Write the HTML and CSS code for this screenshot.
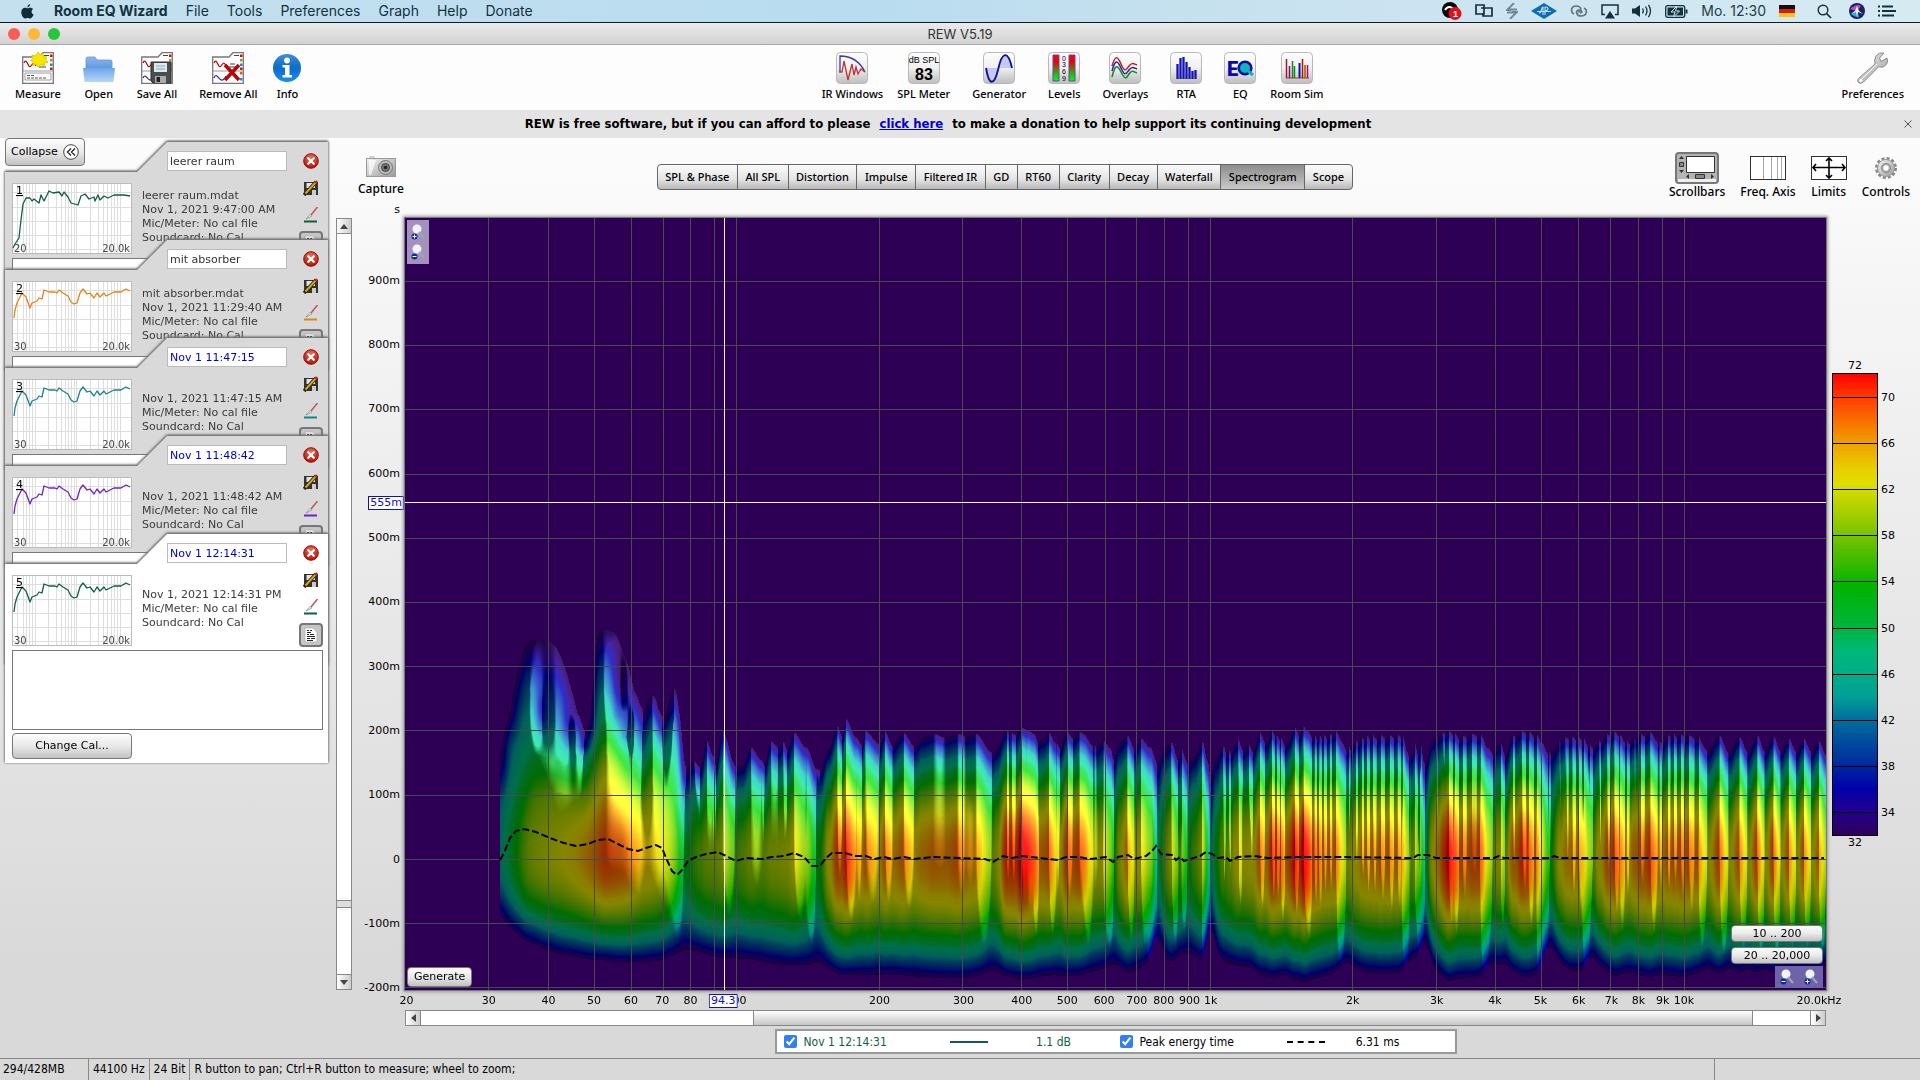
FILE: index.html
```html
<!DOCTYPE html>
<html lang="en">
<head>
<meta charset="utf-8">
<title>REW V5.19</title>
<link rel="stylesheet" href="styles.css">
</head>
<body>
<svg class="sprite" aria-hidden="true">
  <defs>
    <linearGradient id="gBtn" x1="0" y1="0" x2="0" y2="1"><stop offset="0" stop-color="#fdfdfd"/><stop offset=".5" stop-color="#f0f0f0"/><stop offset="1" stop-color="#bdbdbd"/></linearGradient>
    <linearGradient id="gBlue" x1="0" y1="0" x2="0" y2="1"><stop offset="0" stop-color="#8db8ef"/><stop offset="1" stop-color="#5d96df"/></linearGradient>
    <linearGradient id="gFront" x1="0" y1="0" x2="0" y2="1"><stop offset="0" stop-color="#6fa5e8"/><stop offset="1" stop-color="#b6d6fb"/></linearGradient>
    <linearGradient id="gInfo" x1="0" y1="0" x2="0" y2="1"><stop offset="0" stop-color="#3f8fd2"/><stop offset=".5" stop-color="#0d6cc6"/><stop offset="1" stop-color="#1590f5"/></linearGradient>
    <linearGradient id="gLevel" x1="0" y1="0" x2="0" y2="1"><stop offset="0" stop-color="#f00"/><stop offset=".3" stop-color="#d81000"/><stop offset=".75" stop-color="#1fc010"/><stop offset="1" stop-color="#0f0"/></linearGradient>
    <radialGradient id="gRed" cx=".5" cy=".3" r=".7"><stop offset="0" stop-color="#f0705a"/><stop offset="1" stop-color="#b01005"/></radialGradient>
    <linearGradient id="gMetal" x1="0" y1="0" x2="1" y2="1"><stop offset="0" stop-color="#f4f4f4"/><stop offset="1" stop-color="#9a9a9a"/></linearGradient>
  </defs>
  <symbol id="grid" viewBox="0 0 120 71">
    <rect width="120" height="71" fill="#fff"/>
    <path d="M5.500 0V71M11.500 0V71M14.500 0V71M17.500 0V71M20.500 0V71M23.500 0V71M36.500 0V71M44.500 0V71M49.500 0V71M53.500 0V71M56.500 0V71M59.500 0V71M62.500 0V71M64.500 0V71M78.500 0V71M86.500 0V71M91.500 0V71M95.500 0V71M99.500 0V71M102.500 0V71M105.500 0V71M108.500 0V71M0 9.500H120M0 24.500H120M0 38.500H120M0 52.500H120M0 66.500H120" stroke="#dedede" fill="none"/>
    <rect x=".5" y=".5" width="119" height="70" fill="none" stroke="#bbb"/>
  </symbol>
  <symbol id="curveA" viewBox="0 0 120 71"><path d="M1 65L3 61L7 55L9 37L11 21L14 15L18 15L20 18L22 16L27 20L29 12L32 18L34 14L37 8L41 10L47 9L50 13L52 9L56 14L59 20L66 22L69 13L73 11L77 16L82 14L83 18L86 12L88 17L92 13L96 15L102 12L112 12L118 13" fill="none" stroke="currentColor" stroke-width="1.300" stroke-linejoin="round"/></symbol>
  <symbol id="curveB" viewBox="0 0 120 71"><path d="M2 37L3 29L5 22L10 12L14 16L18 27L20 22L25 20L27 17L30 18L32 9L37 11L43 11L45 12L47 9L51 12L56 15L59 21L62 23L65 22L68 12L71 8L75 13L78 12L82 17L85 12L88 16L92 12L94 15L102 11L109 11L114 8L118 10" fill="none" stroke="currentColor" stroke-width="1.300" stroke-linejoin="round"/></symbol>
  <symbol id="close" viewBox="0 0 16 16"><circle cx="8" cy="8" r="7.300" fill="url(#gRed)" stroke="#8d1408"/><path d="M5.200 5.200L10.800 10.800M10.800 5.200L5.200 10.800" stroke="#fff" stroke-width="2.200" stroke-linecap="round"/></symbol>
  <symbol id="save" viewBox="0 0 16 16"><path d="M1 2H15V15H3L1 13Z" fill="#333"/><path d="M3.500 3H12V8H3.500Z" fill="#e2e2e2"/><path d="M9 10H13V15H9Z" fill="#ccc"/><path d="M1 15L13 2" stroke="#2a2a1a" stroke-width="3.600"/><path d="M2.500 13.500L12.500 2.600" stroke="#dba515" stroke-width="2"/><path d="M12.300 3L14 1" stroke="#c22" stroke-width="2.600"/></symbol>
  <symbol id="brush" viewBox="0 0 16 16"><path d="M14.500 0L8 8" stroke="#c4575a" stroke-width="1.600"/><path d="M7.500 7L9 9L3 12Z" fill="#eee" stroke="#777" stroke-width=".6"/><path d="M1 14.500H14" stroke="currentColor" stroke-width="2"/></symbol>
  <symbol id="notes" viewBox="0 0 14 16"><path d="M1 1H9L13 5V15H1Z" fill="#fdfdfd" stroke="#aaa" stroke-width=".7"/><path d="M3 3.500H5M6 3.500H8M3 5.500H7M3 7.500H5M6 7.500H10M3 9.500H11M3 11.500H6M7 11.500H11M3 13.500H9" stroke="#222"/></symbol>
  <symbol id="pages" viewBox="0 0 32 32"><path d="M.7 5H17L21 .7H31.300V31.300H.7Z" fill="#fff" stroke="#777" stroke-width="1.300"/><path d="M.7 19H31" stroke="#999"/><path d="M2 11C5 4 6 18 9 14S12 10 14 14" stroke="#b00" stroke-width="1.200" fill="none"/><path d="M22 3.500H27M18 12H23M17 15H24" stroke="#444"/><path d="M28 2.500H30.500V5H28Z" fill="#c11"/><path d="M28 7H30.500V9.500H28Z" fill="#b80"/><path d="M28 11.500H30.500V14H28Z" fill="#18c"/><path d="M28 15.500H30.500V18H28Z" fill="#a22"/></symbol>
  <symbol id="face" viewBox="0 0 32 32"><rect x=".5" y=".5" width="31" height="31" rx="4" fill="url(#gBtn)" stroke="#b8b8b8"/></symbol>
  <symbol id="zoomIn" viewBox="0 0 18 16"><circle cx="8" cy="5" r="4.500" fill="#f3f1f8"/><path d="M10 8L15 14" stroke="#a99fb8" stroke-width="2"/><circle cx="5.500" cy="12.500" r="3" fill="#0a2f96"/><path d="M3.500 12.500H7.500M5.500 10.500V14.500" stroke="#fff"/></symbol>
  <symbol id="zoomOut" viewBox="0 0 18 16"><circle cx="8" cy="5" r="4.500" fill="#f3f1f8"/><path d="M10 8L15 14" stroke="#a99fb8" stroke-width="2"/><circle cx="5.500" cy="12.500" r="3" fill="#0a2f96"/><path d="M3.500 12.500H7.500" stroke="#fff"/></symbol>
</svg>

<header class="menubar">
  <nav class="menus">
    <svg class="apple" viewBox="0 0 14 16"><path d="M9.800 0C9.900 1.800 8.500 3.600 6.900 3.600C6.700 1.900 8.200.2 9.800 0ZM7.100 4.600C7.800 4.600 8.700 3.900 10 3.900C11.300 3.900 12.400 4.500 13.100 5.400C10.600 6.900 11 10.300 13.600 11.300C13 13 11.500 15.500 10 15.500C8.900 15.500 8.500 14.900 7.200 14.900C5.900 14.900 5.400 15.500 4.400 15.500C2.500 15.500.3 12 .3 8.900C.3 5.800 2.200 4 4.200 4C5.500 4 6.400 4.600 7.100 4.600Z" fill="#0f2c3c"/></svg>
    <a href="#app" class="app">Room EQ Wizard</a><a href="#file">File</a><a href="#tools">Tools</a><a href="#prefs">Preferences</a><a href="#graph">Graph</a><a href="#help">Help</a><a href="#donate">Donate</a>
  </nav>
  <div class="tray">
    <svg width="20" height="18" viewBox="0 0 20 18"><circle cx="8" cy="8" r="8" fill="#0a0a0a"/><path d="M3 8C6 3 10 5 12 8" stroke="#fff" stroke-width="2" fill="none"/><circle cx="13" cy="11.500" r="6.500" fill="#e0101c"/><text x="11" y="15" class="badge">1</text></svg>
    <svg width="18" height="14" viewBox="0 0 18 14"><path d="M1 1H9V10H1ZM6 4H10M8 4H17V12H8V9" fill="none" stroke="#14303c" stroke-width="1.700"/></svg>
    <svg width="12" height="16" viewBox="0 0 12 16"><path d="M8 0L1 7H5M6 9H11L4 16M1 6.500H11M1 9.500H11" fill="none" stroke="#6e8894" stroke-width="1.800"/></svg>
    <svg width="26" height="16" viewBox="0 0 26 16"><path d="M13 0L26 8L13 16L0 8Z" fill="#0c6bb5"/><path d="M8 10C11 10 10 4 12 4V12M14 12V4C18 4 18 7 14 8M6 8.500H20" fill="none" stroke="#bfe0f5" stroke-width="1.100"/></svg>
    <svg width="18" height="14" viewBox="0 0 18 14"><path d="M4 10C0 8 1 2 6 2C12 2 12 8 8 8M14 4C18 6 17 12 11 12C6 12 5 6 9 6C12 6 13 9 10 9" fill="none" stroke="#5b7480" stroke-width="1.600"/></svg>
    <svg width="18" height="15" viewBox="0 0 18 15"><path d="M4 10.500H1V1H17V10.500H14" fill="none" stroke="#14303c" stroke-width="1.500"/><path d="M9 7L14 14.500H4Z" fill="#14303c"/></svg>
    <svg width="20" height="14" viewBox="0 0 20 14"><path d="M0 4.500H3L8 1V13L3 9.500H0Z" fill="#14303c"/><path d="M10.500 4.500Q12 7 10.500 9.500M13.500 2.500Q16.500 7 13.500 11.500M16.500 .8Q20.500 7 16.500 13.200" stroke="#14303c" stroke-width="1.300" fill="none"/></svg>
    <svg width="23" height="13" viewBox="0 0 23 13"><rect x=".7" y=".7" width="19" height="11.600" rx="2" fill="none" stroke="#14303c" stroke-width="1.300"/><rect x="2.500" y="2.500" width="15.500" height="8" fill="#14303c"/><path d="M12 1L6 7H10L8.500 12L14.500 6H10.500Z" fill="#14303c" stroke="#d2e7f0"/><path d="M21.500 4.500V8.500" stroke="#14303c" stroke-width="2"/></svg>
    <time class="clock">Mo. 12:30</time>
    <svg width="16" height="12" viewBox="0 0 16 12"><path d="M0 0H16V4H0Z" fill="#111"/><path d="M0 4H16V8H0Z" fill="#d51b1b"/><path d="M0 8H16V12H0Z" fill="#f6c415"/></svg>
    <svg class="wide" width="15" height="15" viewBox="0 0 15 15"><circle cx="6" cy="6" r="4.800" fill="none" stroke="#14303c" stroke-width="1.400"/><path d="M9.500 9.500L14 14" stroke="#14303c" stroke-width="1.700"/></svg>
    <svg class="mid" width="16" height="16" viewBox="0 0 16 16"><circle cx="8" cy="8" r="8" fill="#1b2266"/><path d="M1 6Q8 0 12 3L8 8Z" fill="#c04ab5"/><path d="M2 11Q6 15 10 14L8 6Z" fill="#2aa8d8"/><path d="M8 3L10 8L14 11L9 9L8 14L7 9L2 11L6 8Z" fill="#e6f4ff"/></svg>
    <svg width="18" height="12" viewBox="0 0 18 12"><path d="M4 1.500H15M4 6H18M4 10.500H16M0 1.500H2M0 6H2M0 10.500H2" stroke="#14303c" stroke-width="1.800"/></svg>
  </div>
</header>

<div class="titlebar"><span class="dot red"></span><span class="dot amber"></span><span class="dot green"></span><h1>REW V5.19</h1></div>

<div class="toolbar">
  <div class="group">
    <button class="tool"><svg viewBox="0 0 32 32"><use href="#pages"/><path d="M3 21H29V28H3Z" fill="#fff" stroke="#888" stroke-width=".8"/><path d="M5 23.500H13M5 26H24" stroke="#555" stroke-dasharray="3 1"/><path d="M16 0L18 3L21 1.500L21.500 4.500L25 5L23.500 8L26 10L22.500 11L22 14L19 12.500L16 15L14.500 12L11 13.500L11.500 10L8.500 8.500L11 6.500L10 3L13.500 4Z" fill="#f7e600" stroke="#e2c900"/></svg>Measure</button>
    <button class="tool"><svg viewBox="0 0 32 32"><path d="M3 17V7Q3 5 5 5H12L14 8H28Q29 8 29 10V17Z" fill="url(#gBlue)" stroke="#6a94cc" stroke-width=".8"/><path d="M0 16H32L30.500 29Q30.500 30 29 30H3Q1.500 30 1.500 29Z" fill="url(#gFront)"/></svg>Open</button>
    <button class="tool"><svg viewBox="0 0 32 32"><use href="#pages"/><path d="M2 26C5 19 7 33 12 26" stroke="#22b" fill="none" stroke-width="1.200"/><path d="M10 10H30V31H12L10 29Z" fill="#4a4d50" stroke="#2c2c2c"/><path d="M13 11H26V20H13Z" fill="#dfe8ee"/><path d="M15 14H24M15 17H24" stroke="#8aa"/><path d="M14 24H25V31H14Z" fill="#aaa"/><path d="M15.500 25H19V30H15.500Z" fill="#222"/></svg>Save All</button>
    <div class="pair">
      <button class="tool"><svg viewBox="0 0 32 32"><use href="#pages"/><path d="M2 26C5 17 8 36 14 24" stroke="#22b" fill="none" stroke-width="1.200"/><path d="M28 20H30.500V22.500H28Z" fill="#c60"/><path d="M28 26H30.500V28.500H28Z" fill="#19c"/><path d="M13 13L27 28M27 13L13 28" stroke="#b30707" stroke-width="3.600"/></svg>Remove All</button>
      <button class="tool"><svg viewBox="0 0 32 32"><circle cx="16" cy="16" r="14" fill="url(#gInfo)"/><circle cx="16" cy="8.500" r="2.900" fill="#fff"/><path d="M11.500 13H18.500V23H21V25.500H11.500V23H14V15.500H11.500Z" fill="#fff"/></svg>Info</button>
    </div>
  </div>
  <div class="group">
    <div class="pair">
      <button class="tool"><svg viewBox="0 0 32 32"><use href="#face"/><path d="M4 20V4C16 4 24 10 29 20" fill="none" stroke="#3a38b8" stroke-width="1.300"/><path d="M3 20H6L8 9L12 28L16 12L18 23L20 15L22 22L25 17L29 20" fill="none" stroke="#b33" stroke-width="1.300"/></svg>IR Windows</button>
      <button class="tool"><svg viewBox="0 0 32 32"><use href="#face"/><text x="16" y="11" class="spl">dB SPL</text><text x="16" y="28" class="spl big">83</text></svg>SPL Meter</button>
    </div>
    <button class="tool"><svg viewBox="0 0 32 32"><use href="#face"/><path d="M3 16H16C12 34 7 32 3 16M16 16H29C26 -1 20 -1 16 16" fill="#c5c9ee"/><path d="M3 16C6 34 11 34 15 18C19 -1 25 -2 29 16" fill="none" stroke="#10109c" stroke-width="1.900"/></svg>Generator</button>
    <button class="tool"><svg viewBox="0 0 32 32"><use href="#face"/><path d="M5 3H11V29H5ZM21 3H27V29H21Z" fill="url(#gLevel)" stroke="#64b"/><text x="16" y="9" class="tiny">0</text><text x="16" y="15" class="tiny">3</text><text x="16" y="22" class="tiny">6</text><text x="16" y="29" class="tiny">9</text></svg>Levels</button>
    <button class="tool"><svg viewBox="0 0 32 32"><use href="#face"/><g fill="none" stroke-width="1.500"><path d="M3 14C6 4 8 3 12 12S17 18 20 14S25 12 28 13" stroke="#b22"/><path d="M3 19C6 8 8 7 12 16S17 22 20 18S25 16 28 17" stroke="#22a"/><path d="M3 25C6 13 8 12 12 20S17 27 20 22S25 20 28 21" stroke="#182"/></g></svg>Overlays</button>
    <button class="tool"><svg viewBox="0 0 32 32"><use href="#face"/><path d="M7.500 27V12M10.500 27V6M13.500 27V5M16.500 27V10M19.500 27V15M22.500 27V19M25.500 27V18" stroke="#1414b4" stroke-width="2.300"/></svg>RTA</button>
    <div class="pair">
      <button class="tool"><svg viewBox="0 0 32 32"><use href="#face"/><text x="3" y="24" class="eq">E</text><circle cx="21" cy="16" r="6.300" fill="#10b5b5" stroke="#0a0aa5" stroke-width="2.600"/><path d="M24 19L29 23" stroke="#10b5b5" stroke-width="3"/></svg>EQ</button>
      <button class="tool"><svg viewBox="0 0 32 32"><use href="#face"/><path d="M5.500 26V7" stroke="#922" stroke-width="1.500"/><path d="M8.500 26V14" stroke="#808" stroke-width="1.500"/><path d="M11.500 26V9M13.500 26V14" stroke="#182" stroke-width="1.500"/><path d="M18.500 26V11" stroke="#11a" stroke-width="2"/><path d="M21.500 26V7" stroke="#a11" stroke-width="1.500"/><path d="M24 26V13" stroke="#a80" stroke-width="2"/><path d="M26.500 26V13" stroke="#a0a" stroke-width="1.500"/><path d="M5 26H28" stroke="#933"/></svg>Room Sim</button>
    </div>
  </div>
  <button class="tool"><svg viewBox="0 0 32 32"><path d="M27 1L22.500 6L24 9.500L30 6Q32 12 26 15Q24 15.500 22 14.500L6.500 30Q3 33 1 30Q0 28 2 26L18 12Q17 8 19 4Q22 0 27 1Z" fill="url(#gMetal)" stroke="#8b8b8b"/><path d="M20 12L5 27" stroke="#fff" opacity=".8"/><circle cx="3.800" cy="28.400" r="1.500" fill="#fff"/></svg>Preferences</button>
</div>

<div class="banner"><p>REW is free software, but if you can afford to please <a href="#donate">click here</a> to make a donation to help support its continuing development</p><button class="dismiss" aria-label="Dismiss"><svg width="8" height="8" viewBox="0 0 8 8"><path d="M.5 .5L7.500 7.500M7.500 .5L.5 7.500" stroke="#555"/></svg></button></div>

<main>
  <aside>
    <button class="btn collapse">Collapse <svg width="16" height="16" viewBox="0 0 16 16"><circle cx="8" cy="8" r="7.300" fill="#fff" stroke="#444"/><path d="M8 4.500L4.500 8L8 11.500M12 4.500L8.500 8L12 11.500" fill="none" stroke="#222" stroke-width="1.300"/></svg></button>
    <div class="stack">
      <div class="shade"><article class="card green1">
        <input class="name" aria-label="Measurement 1 name" value="leerer raum">
        <svg class="thumb" viewBox="0 0 120 71"><use href="#grid"/><use href="#curveA"/><text x="4" y="11" class="num">1</text><text x="2" y="69" class="lim">20</text><text x="118" y="69" class="lim end">20.0k</text></svg>
        <p>leerer raum.mdat<br>Nov 1, 2021 9:47:00 AM<br>Mic/Meter: No cal file<br>Soundcard: No Cal</p>
        <div class="acts"><button aria-label="Remove"><svg><use href="#close"/></svg></button><button aria-label="Save"><svg><use href="#save"/></svg></button><button aria-label="Colour"><svg><use href="#brush"/></svg></button><button class="pressed" aria-label="Notes"><svg><use href="#notes"/></svg></button></div>
        <textarea aria-label="Notes 1"></textarea>
      </article></div>
      <div class="shade"><article class="card orange">
        <input class="name" aria-label="Measurement 2 name" value="mit absorber">
        <svg class="thumb" viewBox="0 0 120 71"><use href="#grid"/><use href="#curveB"/><text x="4" y="11" class="num">2</text><text x="2" y="69" class="lim">30</text><text x="118" y="69" class="lim end">20.0k</text></svg>
        <p>mit absorber.mdat<br>Nov 1, 2021 11:29:40 AM<br>Mic/Meter: No cal file<br>Soundcard: No Cal</p>
        <div class="acts"><button aria-label="Remove"><svg><use href="#close"/></svg></button><button aria-label="Save"><svg><use href="#save"/></svg></button><button aria-label="Colour"><svg><use href="#brush"/></svg></button><button class="pressed" aria-label="Notes"><svg><use href="#notes"/></svg></button></div>
        <textarea aria-label="Notes 2"></textarea>
      </article></div>
      <div class="shade"><article class="card teal">
        <input class="name unsaved" aria-label="Measurement 3 name" value="Nov 1 11:47:15">
        <svg class="thumb" viewBox="0 0 120 71"><use href="#grid"/><use href="#curveB"/><text x="4" y="11" class="num">3</text><text x="2" y="69" class="lim">30</text><text x="118" y="69" class="lim end">20.0k</text></svg>
        <p>Nov 1, 2021 11:47:15 AM<br>Mic/Meter: No cal file<br>Soundcard: No Cal</p>
        <div class="acts"><button aria-label="Remove"><svg><use href="#close"/></svg></button><button aria-label="Save"><svg><use href="#save"/></svg></button><button aria-label="Colour"><svg><use href="#brush"/></svg></button><button class="pressed" aria-label="Notes"><svg><use href="#notes"/></svg></button></div>
        <textarea aria-label="Notes 3"></textarea>
      </article></div>
      <div class="shade"><article class="card violet">
        <input class="name unsaved" aria-label="Measurement 4 name" value="Nov 1 11:48:42">
        <svg class="thumb" viewBox="0 0 120 71"><use href="#grid"/><use href="#curveB"/><text x="4" y="11" class="num">4</text><text x="2" y="69" class="lim">30</text><text x="118" y="69" class="lim end">20.0k</text></svg>
        <p>Nov 1, 2021 11:48:42 AM<br>Mic/Meter: No cal file<br>Soundcard: No Cal</p>
        <div class="acts"><button aria-label="Remove"><svg><use href="#close"/></svg></button><button aria-label="Save"><svg><use href="#save"/></svg></button><button aria-label="Colour"><svg><use href="#brush"/></svg></button><button class="pressed" aria-label="Notes"><svg><use href="#notes"/></svg></button></div>
        <textarea aria-label="Notes 4"></textarea>
      </article></div>
      <div class="shade"><article class="card green1 active">
        <input class="name unsaved" aria-label="Measurement 5 name" value="Nov 1 12:14:31">
        <svg class="thumb" viewBox="0 0 120 71"><use href="#grid"/><use href="#curveB"/><text x="4" y="11" class="num">5</text><text x="2" y="69" class="lim">30</text><text x="118" y="69" class="lim end">20.0k</text></svg>
        <p>Nov 1, 2021 12:14:31 PM<br>Mic/Meter: No cal file<br>Soundcard: No Cal</p>
        <div class="acts"><button aria-label="Remove"><svg><use href="#close"/></svg></button><button aria-label="Save"><svg><use href="#save"/></svg></button><button aria-label="Colour"><svg><use href="#brush"/></svg></button><button class="pressed" aria-label="Notes"><svg><use href="#notes"/></svg></button></div>
        <textarea aria-label="Notes 5"></textarea>
        <button class="btn cal">Change Cal...</button>
      </article></div>
    </div>
  </aside>

  <section class="graph">
    <div class="head">
      <button class="tool small"><svg width="30" height="21" viewBox="0 0 30 21"><path d="M4 0H8V3H4Z" fill="#ddd" stroke="#aaa" stroke-width=".6"/><rect x=".5" y="2.500" width="29" height="18" fill="url(#gMetal)" stroke="#999"/><path d="M3 4H10L5 19H3Z" fill="#fff" opacity=".7"/><circle cx="19.500" cy="11.500" r="7" fill="#bbb" stroke="#777"/><circle cx="19.500" cy="11.500" r="4" fill="#777" stroke="#444"/><circle cx="19.500" cy="11.500" r="1.700" fill="#222"/></svg>Capture</button>
      <div class="tabs"><button>SPL &amp; Phase</button><button>All SPL</button><button>Distortion</button><button>Impulse</button><button>Filtered IR</button><button>GD</button><button>RT60</button><button>Clarity</button><button>Decay</button><button>Waterfall</button><button class="on">Spectrogram</button><button>Scope</button></div>
      <div class="opts">
        <button class="tool small"><svg width="44" height="32" viewBox="0 0 44 32"><rect x="1" y="1" width="42" height="30" rx="3" fill="#b4b4b4" stroke="#777" stroke-width="2"/><path d="M3 27H41V30H3Z" fill="#eee"/><path d="M11.500 4.500H39.500V20.500H11.500Z" fill="#fff" stroke="#333"/><path d="M4.500 10.500H8.500V14.500H4.500ZM20.500 22.500H29.500V26.500H20.500Z" fill="#888" stroke="#333"/><path d="M4 7H9L6.500 4ZM4 18H9L6.500 21ZM14 22V27L11 24.500ZM36 22V27L39 24.500Z" fill="#333"/></svg>Scrollbars</button>
        <button class="tool small"><svg width="36" height="32" viewBox="0 0 36 32"><rect x=".5" y="4.500" width="35" height="23" fill="#fff" stroke="#333"/><path d="M13.500 5V27M21.500 5V27M27.500 5V27M31.500 5V27" stroke="#aaa"/></svg>Freq. Axis</button>
        <button class="tool small"><svg width="36" height="32" viewBox="0 0 36 32"><rect x=".5" y="4.500" width="35" height="23" fill="#fff" stroke="#333"/><path d="M2 15.500H34M18 6V26M5 12L2 15.500L5 19M31 12L34 15.500L31 19M15 9L18 6L21 9M15 23L18 26L21 23" fill="none" stroke="#000" stroke-width="1.600"/></svg>Limits</button>
        <button class="tool small"><svg width="24" height="32" viewBox="0 0 24 32"><circle cx="12" cy="16" r="9.500" fill="none" stroke="#888" stroke-width="3" stroke-dasharray="3 2"/><circle cx="12" cy="16" r="8.500" fill="url(#gMetal)" stroke="#999"/><circle cx="12" cy="16" r="4.500" fill="#aaa" stroke="#888"/><circle cx="12" cy="16" r="2.700" fill="#fff"/></svg>Controls</button>
      </div>
    </div>
    <div class="vscroll"><button aria-label="Scroll up"><i class="up"></i></button><div class="track"><span class="thumbbar"></span></div><button aria-label="Scroll down"><i class="down"></i></button></div>
    <div class="yaxis">
      <span class="unit">s</span>
      <span style="top:8.2%">900m</span><span style="top:16.5%">800m</span><span style="top:24.8%">700m</span><span style="top:33.1%">600m</span><span style="top:41.5%">500m</span><span style="top:49.8%">400m</span><span style="top:58.1%">300m</span><span style="top:66.4%">200m</span><span style="top:74.7%">100m</span><span style="top:83.1%">0</span><span style="top:91.4%">-100m</span><span style="top:99.7%">-200m</span>
      <output style="top:36.9%">555m</output>
    </div>
    <div class="plot">
      <canvas id="spectro" width="1421" height="772"></canvas>
      <div class="zoomv"><button aria-label="Zoom in time"><svg><use href="#zoomIn"/></svg></button><button aria-label="Zoom out time"><svg><use href="#zoomOut"/></svg></button></div>
      <button class="btn generate">Generate</button>
      <div class="ranges"><button class="btn">10 .. 200</button><button class="btn">20 .. 20,000</button><div class="zoomh"><button aria-label="Zoom out frequency"><svg><use href="#zoomOut"/></svg></button><button aria-label="Zoom in frequency"><svg><use href="#zoomIn"/></svg></button></div></div>
    </div>
    <div class="legendbar"><span>72</span><div class="ramp"><b style="top:5%">70</b><b style="top:15%">66</b><b style="top:25%">62</b><b style="top:35%">58</b><b style="top:45%">54</b><b style="top:55%">50</b><b style="top:65%">46</b><b style="top:75%">42</b><b style="top:85%">38</b><b style="top:95%">34</b></div><span>32</span></div>
    <div class="xaxis">
      <span style="left:0.1%">20</span><span style="left:5.9%">30</span><span style="left:10.1%">40</span><span style="left:13.3%">50</span><span style="left:15.9%">60</span><span style="left:18.1%">70</span><span style="left:20.1%">80</span><span style="left:23.3%">100</span><span style="left:33.4%">200</span><span style="left:39.3%">300</span><span style="left:43.4%">400</span><span style="left:46.6%">500</span><span style="left:49.2%">600</span><span style="left:51.5%">700</span><span style="left:53.4%">800</span><span style="left:55.2%">900</span><span style="left:56.7%">1k</span><span style="left:66.7%">2k</span><span style="left:72.6%">3k</span><span style="left:76.7%">4k</span><span style="left:79.9%">5k</span><span style="left:82.6%">6k</span><span style="left:84.9%">7k</span><span style="left:86.8%">8k</span><span style="left:88.5%">9k</span><span style="left:90%">10k</span><span style="left:99.5%">20.0kHz</span>
      <output style="left:22.4%">94.3</output>
    </div>
    <div class="hscroll"><button aria-label="Scroll left"><i class="left"></i></button><div class="track"><span class="thumbbar"></span></div><button aria-label="Scroll right"><i class="right"></i></button></div>
    <div class="legend">
      <input type="checkbox" id="t1" checked><label for="t1" class="g">Nov 1 12:14:31</label><i class="line"></i><span class="g">1.1 dB</span>
      <input type="checkbox" id="t2" checked><label for="t2">Peak energy time</label><i class="line dash"></i><span>6.31 ms</span>
    </div>
  </section>
</main>

<footer><span>294/428MB</span><span>44100 Hz</span><span>24 Bit</span><span class="hint">R button to pan; Ctrl+R button to measure; wheel to zoom;</span><span class="tail"></span></footer>
<script src="spectrogram.js"></script>
</body>
</html>
```
FILE: styles.css
```css
* { box-sizing: border-box; }
body { margin: 0; min-height: 100vh; display: flex; flex-direction: column; font: 11px/14px "DejaVu Sans", sans-serif; color: #000; background: #d9d9d9; }
button, input, textarea { font: inherit; color: inherit; margin: 0; }
button { border: 0; padding: 0; background: none; }
p, h1 { margin: 0; }
svg { display: block; }
.sprite { position: absolute; width: 0; height: 0; }

.menubar { height: 23px; display: flex; justify-content: space-between; align-items: center; padding: 0 24px 0 21px; background: linear-gradient(90deg, #c4e0ee, #b9dcf0 45%, #c6e1ee 62%, #d6eaf2); border-bottom: 1px solid #0c1c26; font: 14px/22px Inter, sans-serif; }
.menubar a { color: #123240; text-decoration: none; }
.menus { display: flex; align-items: center; gap: 18px; }
.apple { width: 13px; height: 15px; margin-right: 2px; }
.menus .app { font-weight: 700; }
.tray { display: flex; align-items: center; gap: 13px; color: #223c48; }
.tray .wide { margin-left: 9px; }
.tray .mid { margin-left: 4px; }
.badge { font: 700 9px "Liberation Sans", sans-serif; fill: #fff; }

.titlebar { height: 22px; display: flex; align-items: center; gap: 8px; padding: 0 8px; background: linear-gradient(#ebebeb, #d2d2d2); border-bottom: 1px solid #aaa; }
.titlebar h1 { flex: 1; padding-right: 60px; text-align: center; font: 13px/20px Inter, sans-serif; color: #333; }
.dot { width: 12px; height: 12px; border-radius: 50%; }
.red { background: #fc5b57; }
.amber { background: #fdb935; }
.green { background: #28c53f; }

.toolbar { height: 65px; display: flex; justify-content: space-between; align-items: flex-start; padding: 7px 16px 0 15px; background: #fdfdfd; }
.group { display: flex; gap: 22px; }
.pair { display: flex; gap: 14px; }
.tool { display: flex; flex-direction: column; align-items: center; gap: 3px; font: 500 11px/14px "Noto Sans", sans-serif; white-space: nowrap; }
.tool svg { width: 32px; height: 32px; }
.spl { font: 9px "Liberation Sans", sans-serif; text-anchor: middle; }
.spl.big { font-size: 16px; font-weight: 700; }
.tiny { font: 7px "Liberation Sans", sans-serif; text-anchor: middle; }
.eq { font: 900 20px Roboto, sans-serif; fill: #0a0aa5; }

.banner { height: 28px; display: flex; align-items: center; padding: 0 8px; background: #e4e4e4; font: 700 13px/18px "DejaVu Sans Condensed", "Noto Sans", sans-serif; }
.banner p { flex: 1; padding-right: 16px; text-align: center; }
.banner a { color: #0000d4; margin: 0 5px; }

main { flex: 1; display: flex; background: linear-gradient(#fcfcfc, #d9d9d9 90%); }
aside { width: 336px; padding: 0 8px 0 5px; }
.btn { border: 1px solid #777; border-radius: 4px; background: linear-gradient(#fdfdfd, #e9e9e9 50%, #c2c2c2); }
.collapse { display: flex; align-items: center; gap: 5px; height: 28px; padding: 0 5px; }
.stack { margin-top: -24px; }
.shade { filter: drop-shadow(0 -1px 1px #666) drop-shadow(0 0 1px #888); pointer-events: none; }
.shade + .shade { margin-top: -131px; }
.card { pointer-events: auto; height: 229px; padding: 9px 5px 4px 7px; display: grid; grid-template: 32px 71px 80px 26px / 120px 1fr 24px; column-gap: 10px; background: #d9d9d9; clip-path: polygon(0 30px, 132px 30px, 162px 0, 100% 0, 100% 100%, 0 100%); }
.card.active { background: #fff; }
.name { grid-area: 1 / 2; margin-left: 25px; width: 120px; height: 20px; border: 1px solid #bbb; padding: 0 2px; background: #fff; color: #333; outline: 0; }
.unsaved { color: #0000c4; }
.thumb { grid-area: 2 / 1; width: 120px; height: 71px; }
.card p { grid-area: 2 / 2; align-self: center; margin-top: -4px; color: #3a3a3a; white-space: nowrap; }
.acts { grid-area: 1 / 3 / 3; display: flex; flex-direction: column; align-items: center; gap: 11px; padding-top: 2px; }
.acts svg { width: 16px; height: 16px; }
.acts .pressed { width: 24px; height: 24px; margin-top: -3px; padding: 2px 3px; flex: none; border: 2px solid #777; border-radius: 4px; background: #c6c6c6; }
.acts .pressed svg { width: 14px; height: 16px; }
.card textarea { grid-area: 3 / 1 / 4 / 4; margin-top: 4px; height: 80px; border: 1px solid #777; resize: none; background: #fff; }
.cal { grid-area: 4 / 1; margin-top: 7px; height: 26px; }
.num { font-size: 11px; text-decoration: underline; fill: #000; }
.lim { font: 11px "DejaVu Sans Condensed", "DejaVu Sans", sans-serif; fill: #444; }
.end { text-anchor: end; }
.green1 .thumb, .green1 .acts { color: #106040; }
.orange .thumb, .orange .acts { color: #e0851a; }
.teal .thumb, .teal .acts { color: #17858a; }
.violet .thumb, .violet .acts { color: #7022c4; }

.graph { flex: 1; min-width: 0; display: grid; grid-template: 80px 1fr 20px 16px 32px / 16px 53px 1fr 94px; font-size: 11px; }
.head { grid-area: 1 / 1 / 2 / 5; display: grid; grid-template-columns: auto 4fr auto 5fr auto; padding: 14px 10px 0 22px; align-items: start; }
.tool.small { gap: 1px; font-size: 12px; }
.tool.small svg { width: auto; height: auto; }
.head > .tool.small { padding-top: 4px; gap: 5px; }
.tabs { grid-column: 3; display: flex; width: 696px; height: 26px; margin-top: 12px; border: 1px solid #666; border-radius: 4px; background: linear-gradient(#fbfbfb, #e4e4e4 60%, #b8b8b8); overflow: hidden; }
.tabs button { flex: 1 1 auto; font: 500 11px/22px "Noto Sans", sans-serif; white-space: nowrap; }
.tabs button + button { border-left: 1px solid #666; }
.tabs .on { background: linear-gradient(#8d8d8d, #c9c9c9); }
.opts { grid-column: 5; display: flex; gap: 15px; }

.vscroll, .hscroll { display: flex; border: 1px solid #888; background: #fff; }
.vscroll { grid-area: 2 / 1; flex-direction: column; }
.hscroll { grid-area: 4 / 3; }
.track { flex: 1; display: flex; }
.vscroll .track { flex-direction: column; justify-content: flex-end; padding-bottom: 66px; }
.vscroll .thumbbar { height: 8px; background: #ddd; border: solid #888; border-width: 1px 0; }
.hscroll .track { padding: 0 4% 0 23.4%; }
.hscroll .thumbbar { flex: 1; background: linear-gradient(#fff, #c6c6c6); border: solid #888; border-width: 0 1px; }
.vscroll button, .hscroll button { flex: 0 0 15px; display: grid; place-items: center; background: linear-gradient(90deg, #fff, #ccc); }
.vscroll button:first-child { border-bottom: 1px solid #888; }
.vscroll button:last-child { border-top: 1px solid #888; }
.hscroll button:first-child { border-right: 1px solid #888; }
.hscroll button:last-child { border-left: 1px solid #888; }
i.up, i.down, i.left, i.right { border: 4px solid transparent; }
i.up { border-top: 0; border-bottom: 5px solid #444; }
i.down { border-bottom: 0; border-top: 5px solid #444; }
i.left { border-left: 0; border-right: 5px solid #444; }
i.right { border-right: 0; border-left: 5px solid #444; }

.yaxis { grid-area: 2 / 2; position: relative; }
.yaxis span, .yaxis output { position: absolute; right: 5px; transform: translateY(-50%); }
.yaxis .unit { top: -8px; }
.yaxis output, .xaxis output { padding: 0 1px; line-height: 12px; border: 1px solid #1111b4; color: #1111b4; background: #fff; }
.yaxis output { right: 1px; }
.plot { grid-area: 2 / 3; position: relative; min-height: 400px; background: #2d0055; box-shadow: 0 0 0 1px #777, 0 0 3px 2px #999; }
.plot canvas { position: absolute; inset: 0; width: 100%; height: 100%; }
.zoomv { position: absolute; left: 2px; top: 2px; width: 22px; height: 44px; padding: 4px 2px; display: grid; gap: 4px; background: #a392bb; }
.plot svg { width: 18px; height: 16px; }
.generate { position: absolute; left: 2px; bottom: 3px; height: 20px; padding: 0 6px; }
.ranges { position: absolute; right: 3px; bottom: 2px; width: 92px; display: flex; flex-direction: column; gap: 5px; }
.ranges .btn { height: 17px; line-height: 14px; }
.zoomh { align-self: flex-end; width: 48px; height: 22px; margin-top: -3px; padding: 3px; display: flex; gap: 6px; background: #6c63a8; }

.legendbar { grid-area: 2 / 4; padding: 141px 42px 0 6px; display: flex; flex-direction: column; text-align: center; }
.ramp { position: relative; height: 463px; flex: none; border: 1px solid #000; background: linear-gradient(#f00, #ff3c00 5%, #f0a000 15%, #e6d200 21%, #dede00 24%, #78c300 35%, #00b400 46%, #00b43c 55%, #00b978 60%, #00a096 70%, #006e9b 75%, #0028a0 85%, #0000aa 90%, #23008c 95%, #2d005a); }
.ramp b { position: absolute; left: 0; width: 44px; border-top: 1px solid #000; font-weight: 400; line-height: 0; text-indent: 48px; white-space: nowrap; text-align: left; }

.xaxis { grid-area: 3 / 3; position: relative; }
.xaxis span, .xaxis output { position: absolute; top: 4px; transform: translateX(-50%); white-space: nowrap; }
.legend { grid-area: 5 / 3; justify-self: center; margin: 3px 0 4px; width: 682px; height: 25px; display: grid; grid-template-columns: 13px 139px 38px 118px 13px 140px 38px 92px; column-gap: 7px; align-items: center; padding-left: 7px; background: #fff; border: 2px solid #999; font: 12px/14px "DejaVu Sans Condensed", "DejaVu Sans", sans-serif; }
.legend input { width: 13px; height: 13px; accent-color: #2f7ff5; }
.legend span { text-align: center; }
.g { color: #106040; }
.line { border-top: 2px solid #106040; }
.line.dash { border-top: 2px dashed #000; }

footer { height: 22px; display: flex; font: 12px/21px "DejaVu Sans Condensed", "DejaVu Sans", sans-serif; border-top: 1px solid #888; background: #d9d9d9; white-space: nowrap; }
footer span { padding: 0 4px; border-right: 1px solid #888; }
footer span:first-child { width: 89px; padding-left: 3px; }
footer .hint { flex: 1; }
footer .tail { width: 205px; border: 0; }
```
FILE: spectrogram.js
```js
// Window coordinates of the default view; the canvas origin sits at X0, Y0.
const X0 = 405, Y0 = 218, W = 1421, H = 772, ZERO = 855;

// low modes: position, then the heights of the 32, 42, 50 and 58 dB contours, then the peak level
const modes = [
  [500,765,800,850,852,45],[510,712,745,825,850,50.500],[520,660,715,785,850,55.500],[527,642,688,768,822,59],[533,638,694,756,803,60],[541,639,728,755,797,61],[548,640,726,757,792,61.500],[555,645,718,762,791,62],[562,660,732,765,793,62.500],[570,685,745,769,796,63.500],[577,712,737,767,796,64.500],[584,746,756,774,796,65.500],[590,725,742,757,786,66.500],[597,627,692,742,772,68],[603,628,676,724,752,69.500],[609,630,692,726,755,69.400],[615,632,716,737,764,69],[623,642,737,752,778,68.500],[628,658,742,759,787,68],[633,690,722,757,791,67],[638,702,740,766,797,66],[641,712,757,777,802,65],[646,714,741,764,794,64.700],[651,692,718,744,777,64.600],[657,708,735,759,790,63.800],[662,726,746,770,800,62.500],[668,712,730,764,808,61],[673,684,718,770,832,58.500],[678,702,744,790,850,54.500],[682,762,806,840,850,50.500],[686,776,798,838,850,51.500],[692,760,782,812,850,55],[700,765,783,806,850,57.500]];

// frequency position, decay end, peak level (dB), onset start
const ridge = [
  [500,762,45,915],[508,722,49,925],[515,685,53,933],[528,640,59,942],[549,640,61.500,950],[560,655,62.300,954],[570,690,63.500,956],[590,700,66.500,959],[603,627,69.500,960],[622,648,68.600,962],[640,715,65.300,962],[650,692,64.600,961],[660,725,63,960],[673,684,58.500,955],[684,770,51,949],[687,778,52,949],[693,760,56,950],[700,768,57.500,952],[706,740,58.700,954],[713,755,59.200,956],[715,764,59.400,957],[722,730,60.500,958],[735,765,56.500,958],[742,765,58,958],[750,747,59.600,959],[762,760,58.600,961],[764,765,58.800,962],[770,740,60,963],[778,747,60.400,964],[783,741,60.800,965],[787,750,61.200,965],[793,732,63,965],[806,747,58.500,965],[816,768,51.500,962],[820,770,54,962],[828,748,63,968],[837,725,68.500,974],[842,737,69,975],[845,718,70.500,975],[856,737,67,975],[862,745,66,975],[864,730,67,975],[880,744,65,974],[884,730,67,974],[892,745,66,974],[903,732,67,975],[914,746,65,976],[922,737,66,977],[933,733,67,977],[945,737,67,978],[957,733,68,978],[965,736,67,978],[975,733,66,976],[992,752,59,970],[996,748,61,971],[1006,730,70,976],[1015,734,70,978],[1021,727,73,979],[1034,733,70,978],[1038,743,67,977],[1041,740,67,976],[1048,733,68,975],[1057,744,64,975],[1059,747,64,975],[1067,731,69,976],[1073,738,68,976],[1079,731,69,975],[1095,746,62,971],[1103,740,62,968],[1110,748,58,966],[1113,758,54,962],[1119,742,61,967],[1127,735,66,972],[1134,748,62,970],[1140,738,63,967],[1150,747,58,960],[1157,763,48,933],[1164,747,57,955],[1171,742,61,963],[1178,760,57,955],[1181,749,57,954],[1187,762,53,952],[1194,755,57,955],[1202,741,60,962],[1207,760,52,945],[1210,775,45,915],[1216,758,53,952],[1222,746,58,960],[1230,752,60,963],[1237,740,63,966],[1244,750,62,966],[1248,742,63,967],[1252,753,63,968],[1258,733,67,974],[1267,742,66,976],[1270,731,70,978],[1280,738,69,976],[1285,745,67,975],[1294,728,71,980],[1300,734,70,979],[1303,726,73,983],[1312,736,69,979],[1325,736,67,976],[1336,732,67,971],[1346,749,60,960],[1352,743,63,966],[1365,737,66,972],[1385,736,67,973],[1400,735,66,972],[1410,755,59,960],[1415,745,60,957],[1418,756,57,955],[1420,741,57,957],[1424,764,48,935],[1431,742,61,962],[1437,735,66,972],[1448,731,72,981],[1460,737,68,978],[1468,735,68,978],[1478,734,69,977],[1492,752,59,963],[1500,742,62,965],[1504,755,59,962],[1513,735,67,972],[1524,731,70,977],[1535,735,67,975],[1550,753,54,945],[1560,740,63,962],[1568,737,66,970],[1580,738,66,971],[1592,747,58,956],[1600,740,64,966],[1608,734,68,972],[1614,732,69,976],[1628,742,65,972],[1640,735,68,975],[1650,733,69,977],[1660,743,66,974],[1668,735,67,975],[1683,735,68,977],[1697,737,67,973],[1707,750,62,968],[1719,735,68,974],[1728,752,62,968],[1739,736,67,973],[1747,751,62,968],[1757,735,68,973],[1764,750,62,968],[1773,736,68,973],[1780,750,62,967],[1788,738,67,972],[1796,751,62,967],[1803,738,67,972],[1811,751,62,967],[1818,740,66,970],[1826,755,60,965]];

// fine comb on top of the ridge: from, to, period, depth
const comb = [[1008,1100,9,2],[1225,1256,6,4],[1256,1346,6,4],[1350,1408,7,5],[1408,1425,5,3],[1428,1550,8,4],[1560,1630,7,4],[1630,1700,8,4]];

// gaps between the slowly decaying low modes: x, y, radii, depth
const gaps = [[541,712,5,20,5.500],[567,725,5,22,4],[619,685,6,30,5],[629,720,4,14,3]];

const scale = [[32,45,0,90],[34,35,0,140],[36,0,0,170],[38,0,40,160],[42,0,110,155],[44,0,160,150],[48,0,185,120],[50,0,180,60],[53.500,0,180,0],[58,120,195,0],[62.500,222,222,0],[64,230,210,0],[66,240,160,0],[70,255,60,0],[72,255,0,0]];

const peakTime = [[500,860],[504,853],[510,838],[516,831],[524,829],[536,832],[550,838],[564,843],[576,846],[588,844],[598,840],[608,839],[618,844],[628,849],[638,851],[646,848],[656,845],[662,848],[667,860],[672,871],[677,875],[682,870],[688,861],[696,857],[706,854],[718,852],[724,855],[736,861],[746,858],[762,859],[772,857],[784,856],[794,853],[804,857],[812,866],[820,866],[826,858],[832,853],[845,853],[856,856],[866,856],[874,859],[884,857],[892,859],[904,857],[914,859],[932,857],[985,859],[993,862],[1003,856],[1012,858],[1022,856],[1040,858],[1057,860],[1066,857],[1078,857],[1090,859],[1106,857],[1113,862],[1118,857],[1128,855],[1134,859],[1146,856],[1152,851],[1156,846],[1161,854],[1172,855],[1176,860],[1180,857],[1184,861],[1200,856],[1206,852],[1212,854],[1218,858],[1226,857],[1230,861],[1238,857],[1254,856],[1268,858],[1300,857],[1340,857],[1413,858],[1418,855],[1428,855],[1436,858],[1494,858],[1499,856],[1504,858],[1550,858],[1554,856],[1560,858],[1824,858]];

const clamp = (v, lo, hi) => Math.max(lo, Math.min(hi, v));

const raw = [];
let k = 0;
for (let i = 0; i < W; i++) {
  const x = clamp(i + X0, 500, 1825.900);
  while (k < ridge.length - 2 && x >= ridge[k + 1][0]) k++;
  const a = ridge[k], b = ridge[k + 1];
  const f = (1 - Math.cos(Math.PI * (x - a[0]) / (b[0] - a[0]))) / 2;
  const c = [1, 2, 3].map(n => a[n] + (b[n] - a[n]) * f);
  for (const [from, to, period, depth] of comb) {
    if (x < from || x >= to) continue;
    const p = ((x + 1.700 * Math.sin(x / 7) - from) % period) / period;
    const s = p < .45 ? p / .45 : (1 - p) / .55;
    c[0] -= depth * (s - .5);
    c[1] += depth * .3 * (s - .5);
  }
  raw.push(c);
}
function mean(i, n, r) {
  let sum = 0;
  for (let j = -r; j <= r; j++) sum += raw[clamp(i + j, 0, W - 1)][n];
  return sum / (2 * r + 1);
}
const columns = raw.map((c, i) => {
  const low = i + X0 < 830;
  const limit = low ? .500 : 3;
  const lift = clamp((mean(i, 0, 12) - c[0]) * (low ? .03 : .12), -limit, limit);
  return { top: c[0], peak: c[1] + lift, broad: mean(i, 1, low ? 3 : 2) + lift * .15, bottom: mean(i, 2, 4) };
});

function modeLevel(m, y) {
  const peak = m[5];
  const points = [[m[1], 32]];
  [42, 50, 58].forEach((l, n) => { if (l < peak - .4) points.push([m[n + 2], l]); });
  points.push([ZERO, peak]);
  if (y <= points[0][0]) return 32 - (points[0][0] - y) * .12;
  let n = 1;
  while (n < points.length - 1 && points[n][0] < y) n++;
  const a = points[n - 1], b = points[n];
  let f = clamp((y - a[0]) / (b[0] - a[0]), 0, 1);
  if (n === points.length - 1) f = 1 - (1 - f) ** 1.800;
  return a[1] + (b[1] - a[1]) * f;
}

// low-mode levels for x 500..700, smoothed sideways
const LOW0 = 500, LOWN = 206, LOWY = 600;
const low = [];
for (let y = LOWY; y <= ZERO; y++) {
  let row = [];
  let m = 0;
  for (let n = 0; n < LOWN; n++) {
    const x = Math.min(LOW0 + n, 699.900);
    while (m < modes.length - 2 && x >= modes[m + 1][0]) m++;
    const a = modes[m], b = modes[m + 1], f = (x - a[0]) / (b[0] - a[0]);
    let v = modeLevel(a, y) * (1 - f) + modeLevel(b, y) * f;
    for (const [hx, hy, rx, ry, d] of gaps) v -= d * Math.exp(-(((x - hx) / rx) ** 2) - ((y - hy) / ry) ** 2);
    row.push(v);
  }
  for (let pass = 0; pass < 3; pass++) {
    row = row.map((v, n) => (row[Math.max(n - 2, 0)] + row[Math.max(n - 1, 0)] + v + row[Math.min(n + 1, LOWN - 1)] + row[Math.min(n + 2, LOWN - 1)]) / 5);
  }
  low.push(row);
}

function ridgeLevel(c, y) {
  const mix = clamp((y - 800) / 110, 0, 1);
  const p = c.peak + (c.broad - c.peak) * mix;
  if (y >= ZERO) return 32 + (p - 32) * (1 - Math.pow((y - ZERO) / (c.bottom - ZERO), 2.200));
  const h = ZERO - c.top;
  return 32 + (p - 32) * (1 - Math.pow((ZERO - y) / h, 1.950));
}

function level(i, y) {
  const c = columns[i], x = i + X0;
  if (x >= 702) return ridgeLevel(c, y);
  if (y < LOWY) return 0;
  const peak = low[ZERO - LOWY][x - LOW0];
  const v = y > ZERO ? 32 + (peak - 32) * (1 - Math.pow((y - ZERO) / (c.bottom - ZERO), 2.200)) : low[y - LOWY][x - LOW0];
  if (x < 690) return v;
  const f = (x - 690) / 12;
  return v * (1 - f) + ridgeLevel(c, y) * f;
}

function colour(v) {
  if (v >= 72) return scale[scale.length - 1].slice(1);
  let n = 1;
  while (scale[n][0] < v) n++;
  const a = scale[n - 1], b = scale[n], f = (v - a[0]) / (b[0] - a[0]);
  return [1, 2, 3].map(m => a[m] + (b[m] - a[m]) * f);
}

const ctx = document.getElementById("spectro").getContext("2d");
const image = ctx.createImageData(W, H);
for (let j = 0; j < H; j++) {
  const y = j + Y0;
  for (let i = 0; i < W; i++) {
    const o = (j * W + i) * 4;
    let rgb = [45, 0, 85];
    const v = i + X0 >= 500 ? level(i, y) : 0;
    if (v > 32) {
      const dx = (level(Math.min(i + 1, W - 1), y) - level(Math.max(i - 1, 95), y)) / 2;
      const dy = y > ZERO ? v - level(i, y + 1) : 0;
      const light = clamp((-dx - dy * 1.100 + .02) / .2, 0, 1);
      const white = 64 * light * clamp((890 - y) / 90, 0, 1) * clamp(.45 + (v - 32) / 16, 0, 1);
      rgb = colour(v).map(c => c * (.6 + .33 * light) + white);
    }
    image.data[o] = rgb[0];
    image.data[o + 1] = rgb[1];
    image.data[o + 2] = rgb[2];
    image.data[o + 3] = 255;
  }
}
ctx.putImageData(image, 0, 0);

ctx.fillStyle = "#4b4950";
for (let decade = 10; decade <= 10000; decade *= 10) {
  for (let m = 1; m < 10; m++) {
    const freq = decade * m;
    if (freq > 20 && freq < 20000) ctx.fillRect(Math.round(Math.log10(freq / 20) * 473.700), 0, 1, H);
  }
}
for (let n = 0; n < 12; n++) ctx.fillRect(0, Math.round(63 + n * 64.200), W, 1);
ctx.fillStyle = "#f4eef6";
ctx.fillRect(319, 0, 1, H);
ctx.fillRect(0, 284, W, 1);

ctx.strokeStyle = "#000";
ctx.lineWidth = 2;
ctx.setLineDash([7, 3]);
ctx.beginPath();
peakTime.forEach(([x, y]) => ctx.lineTo(x - X0, y - Y0));
ctx.stroke();
```
